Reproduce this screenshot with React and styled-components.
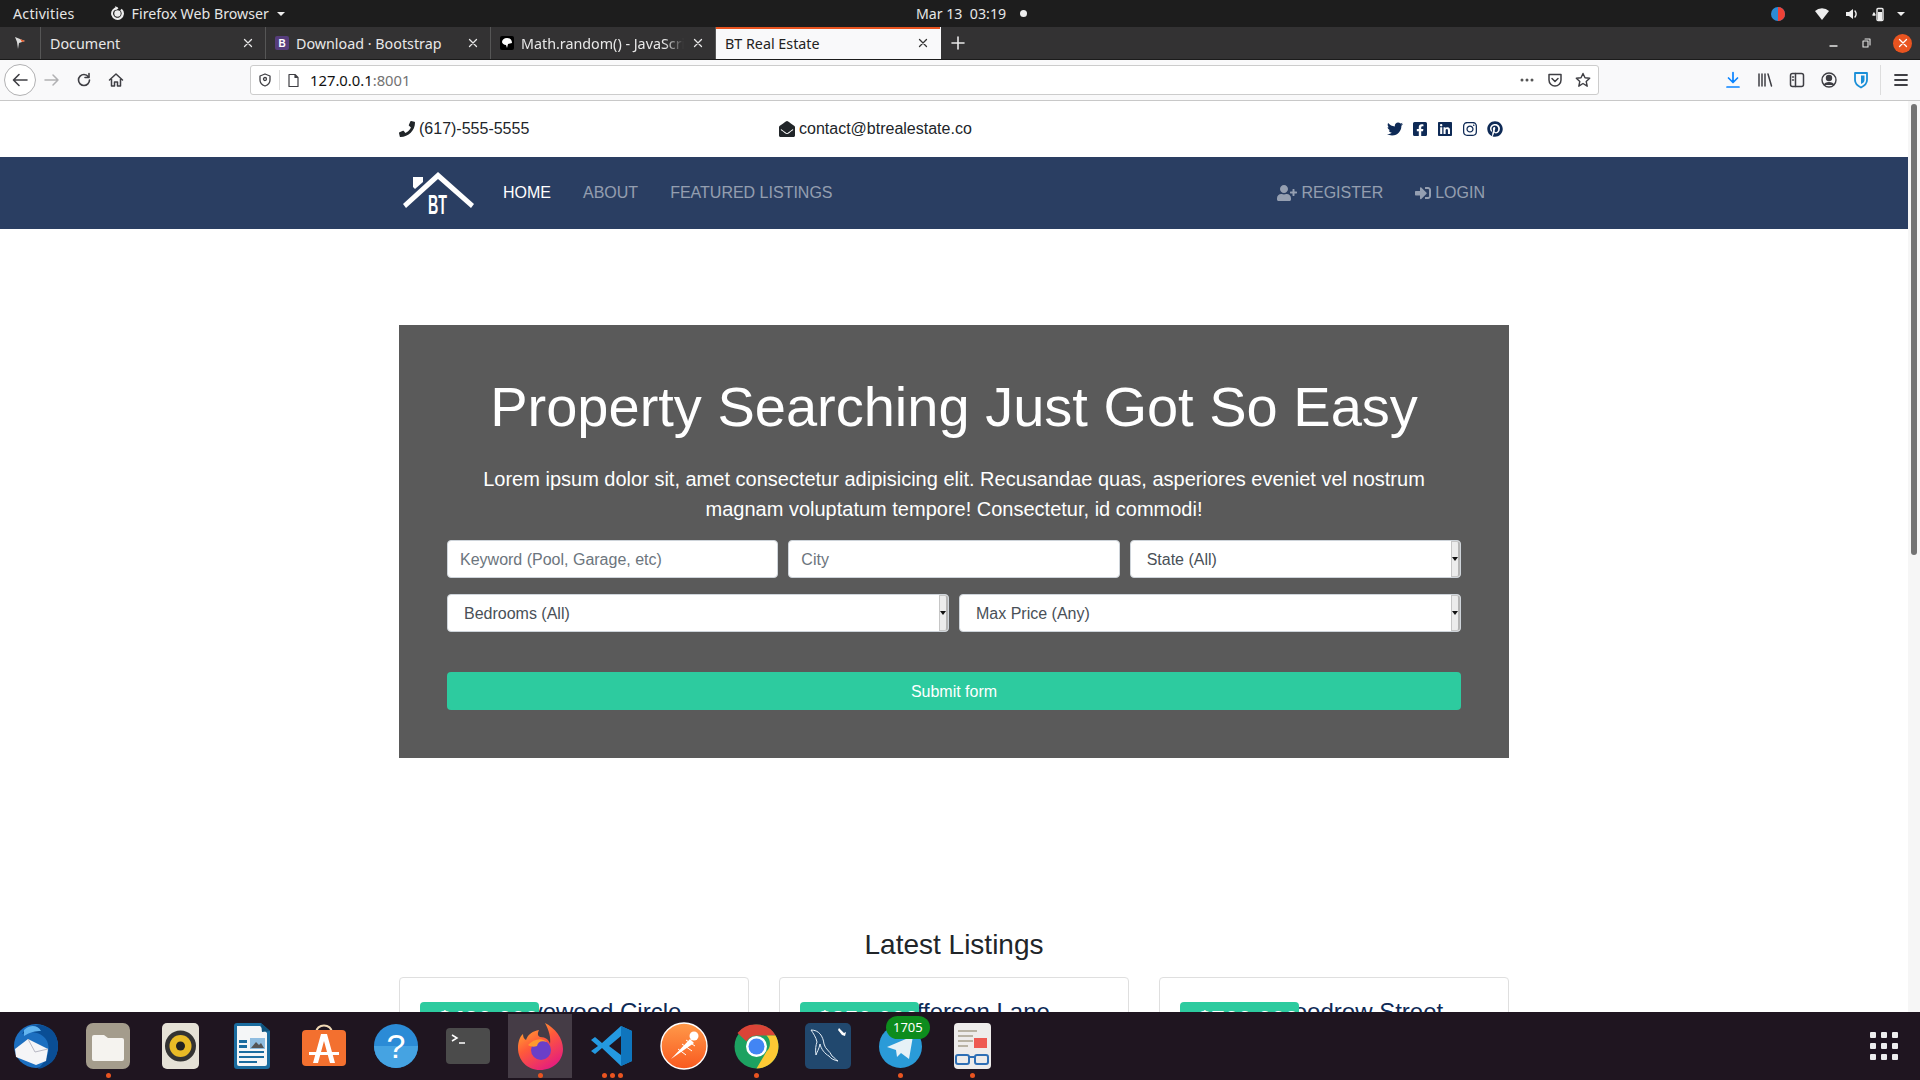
import React from 'react';
import styled, { createGlobalStyle } from 'styled-components';
import { FaPhone, FaEnvelopeOpen, FaTwitter, FaFacebookSquare, FaLinkedin, FaInstagram, FaPinterest, FaUserPlus, FaSignInAlt } from 'react-icons/fa';

const Global = createGlobalStyle`
  html, body { margin: 0; padding: 0; height: 100%; overflow: hidden; background: #fff; }
  * { box-sizing: border-box; }
  #root { height: 100%; }
`;
const sys = `"Noto Sans", "Open Sans", sans-serif`;
const web = `"Liberation Sans", Arial, sans-serif`;

const Screen = styled.div`
  width: 1920px; height: 1080px; display: flex; flex-direction: column; overflow: hidden; font-family: ${web};
`;
const TopBar = styled.div`
  height: 27px; flex: none; background: #1d1d1d; color: #e6e6e6; font: 14.2px ${sys};
  display: grid; grid-template-columns: 1fr auto 1fr; align-items: center; padding: 0 12px 0 13px;
`;
const TopLeft = styled.div`display: flex; align-items: center; gap: 35px;`;
const Activities = styled.span`letter-spacing: .25px;`;
const AppMenu = styled.div`display: flex; align-items: center; gap: 7px;`;
const Clock = styled.div`display: flex; align-items: center; gap: 14px; margin-left: 22px;`;
const StatusDot = styled.span`width: 7px; height: 7px; border-radius: 50%; background: #eee;`;
const TopRight = styled.div`display: flex; justify-content: flex-end; align-items: center; gap: 12px; padding-right: 2px;`;
const Tray = styled.span`display: flex; margin-right: ${p => p.$mr || 0}px; margin-left: ${p => p.$ml || 0}px;`;

const TabBar = styled.div`
  height: 33px; flex: none; background: #333233; display: flex; align-items: stretch; color: #e8e8e8; font: 14.3px ${sys};
  border-bottom: 1px solid #1b1b1b;
`;
const TabPin = styled.div`width: 41px; display: flex; align-items: center; justify-content: center; border-right: 1px solid #565656;`;
const Tab = styled.div`
  width: 225px; display: flex; align-items: center; gap: 7px; padding: 0 10px 0 9px; position: relative; white-space: nowrap;
  border-right: 1px solid ${p => p.$active ? 'transparent' : '#565656'};
  background: ${p => p.$active ? '#f9f9fa' : 'transparent'};
  color: ${p => p.$active ? '#222' : '#e8e8e8'};
  box-shadow: ${p => p.$active ? 'inset 0 2px 0 #e95420' : 'none'};
`;
const TabTitle = styled.span`
  flex: 1; overflow: hidden;
  ${p => p.$fade ? 'mask-image: linear-gradient(to right, #000 88%, transparent);' : ''}
`;
const TabClose = styled.span`width: 14px; display: flex; justify-content: center;`;
const Favicon = styled.span`
  width: 14px; height: 14px; flex: none; border-radius: 2px; background: ${p => p.$bg}; color: #fff; font: bold 10px ${web};
  display: flex; align-items: center; justify-content: center;
`;
const NewTab = styled.div`width: 33px; display: flex; align-items: center; justify-content: center;`;
const Spacer = styled.div`flex: 1;`;
const WinControls = styled.div`display: flex; align-items: center; gap: 22px; padding-right: 8px;`;
const CloseCircle = styled.span`
  width: 19px; height: 19px; border-radius: 50%; background: #e95420; display: flex; align-items: center; justify-content: center;
`;

const Toolbar = styled.div`
  height: 41px; flex: none; background: #f9f9fa; border-bottom: 1px solid #c8c8c8; display: flex; align-items: center; padding: 0 0 0 4px; color: #3f3f44;
`;
const BackBtn = styled.div`
  width: 32px; height: 32px; border-radius: 50%; border: 1px solid #b1b1b3; background: #fff; display: flex; align-items: center; justify-content: center;
`;
const NavIcon = styled.div`width: 32px; flex: none; display: flex; justify-content: center; align-items: center;`;
const UrlBar = styled.div`
  width: 1349px; height: 30px; margin-left: 118px; background: #fff; border: 1px solid #ccc; border-radius: 3px; display: flex; align-items: center; padding: 0 7px;
  font: 14.8px ${sys};
`;
const UrlDivider = styled.span`width: 1px; height: 20px; background: #ddd; margin: 0 6px 0 7px;`;
const Host = styled.span`color: #111; margin-left: 9px;`;
const Port = styled.span`color: #737373;`;
const UrlGrow = styled.span`flex: 1;`;
const UrlActions = styled.div`display: flex; align-items: center; gap: 12px;`;
const ToolRight = styled.div`display: flex; align-items: center; margin-left: 118px;`;
const ToolDiv = styled.span`width: 1px; height: 30px; background: #ddd; margin: 0 4px 0 3px;`;

const Viewport = styled.div`flex: 1; min-height: 0; display: flex; overflow: hidden;`;
const Page = styled.div`flex: 1; min-width: 0; overflow: hidden; background: #fff;`;
const Scrollbar = styled.div`width: 12px; flex: none; background: #f6f6f6; padding: 3px 3px 0;`;
const Thumb = styled.div`height: 451px; background: #737373; border-radius: 3px;`;

const Container = styled.div`width: 1110px; margin: 0 auto; height: ${p => p.$fill ? '100%' : 'auto'};`;
const ContactBar = styled.div`height: 56px;`;
const ContactRow = styled.div`
  height: 100%; display: grid; grid-template-columns: 1fr 1fr 1fr; align-items: center; color: #212529; font-size: 16px;
`;
const ContactItem = styled.div`display: flex; align-items: center; gap: 4px; margin-left: ${p => p.$ml || 0}px; svg { color: #212529; }`;
const Socials = styled.div`display: flex; justify-content: flex-end; align-items: center; gap: 9px; padding-right: 6px; color: #0e2a56;`;

const Nav = styled.nav`height: 72px; background: #2a3e62;`;
const NavInner = styled.div`height: 100%; display: flex; align-items: center; font-size: 16px; color: rgba(255,255,255,.5);`;
const NavLogo = styled.svg`width: 72px; height: 44px; margin: 0 28px 0 4px; flex: none;`;
const NavLink = styled.a`
  color: ${p => p.$active ? '#fff' : 'rgba(255,255,255,.5)'}; padding: 0 16px; display: flex; align-items: center; gap: 4px;
`;
const NavLeft = styled.div`display: flex; flex: 1; margin-left: -16px;`;
const NavRight = styled.div`display: flex; margin-right: 8px;`;

const Hero = styled.section`
  margin-top: 96px; background: #5a5a5a; color: #fff; text-align: center; padding: 48px 48px 48px; height: 433px;
`;
const Title = styled.h1`margin: 0 0 24px; font-size: 56px; font-weight: 300; line-height: 67px; font-family: ${web};`;
const Lead = styled.p`margin: 0 0 16px; font-size: 20px; line-height: 30px; font-weight: 300;`;
const FormRow = styled.div`display: grid; grid-template-columns: ${p => p.$cols}; gap: ${p => p.$gap}px; margin-bottom: 16px;`;
const fieldBase = `
  width: 100%; height: 38px; background: #fff; border: 1px solid #ced4da; border-radius: 4px; font: 16px ${web}; color: #495057; outline: none;
`;
const Input = styled.input`
  ${fieldBase} padding: 1px 12px 0;
  &::placeholder { color: #6c757d; opacity: 1; }
`;
const SelectWrap = styled.div`position: relative;`;
const Select = styled.select`
  ${fieldBase} padding: 0 16px; appearance: none;
`;
const Spin = styled.span`
  position: absolute; right: 1px; top: 1px; bottom: 1px; width: 9px; background: #ececec; border: 1px solid #c6c6c6; border-right: 2px solid #b5b5b5; border-radius: 0 3px 3px 0;
  display: flex; align-items: center; justify-content: center;
  &::after { content: ''; border-left: 3px solid transparent; border-right: 3px solid transparent; border-top: 4px solid #111; }
`;
const Submit = styled.button`
  display: block; width: 100%; height: 38px; margin-top: 40px; padding: 1px 0 0; background: #2dcb9f; color: #fff; border: 0; border-radius: 4px; font: 16px ${web};
`;

const Listings = styled.section`margin-top: 170px; text-align: center;`;
const ListHead = styled.h3`margin: 0 0 15px; font: 400 28px/34px ${web}; color: #212529;`;
const Cards = styled.div`display: grid; grid-template-columns: repeat(3, 350px); gap: 30px;`;
const Card = styled.div`position: relative; height: 300px; border: 1px solid #dfdfdf; border-radius: 4px; padding-top: 19px;`;
const CardTitle = styled.h4`margin: 0; font: 400 24px/29px ${web}; color: #0e2a56;`;
const Badge = styled.span`
  position: absolute; left: 20px; top: 24px; width: 119px; height: 40px; background: #2dcb9f; border-radius: 4px; color: #fff; font: bold 24px/36px ${web}; text-align: left; padding-left: 18px;
`;

const Dock = styled.div`
  height: 68px; flex: none; background: #1f1520; display: flex; align-items: center; position: relative;
`;
const DockItem = styled.div`
  width: 72px; height: 64px; flex: none; display: flex; align-items: center; justify-content: center; position: relative;
  background: ${p => p.$active ? '#453c46' : 'transparent'};
  margin: ${p => p.$active ? '0 4px' : '0'}; ${p => p.$active ? 'width: 64px;' : ''}
  svg { display: block; }
`;
const Dots = styled.span`position: absolute; bottom: 0; left: 0; right: 0; display: flex; justify-content: center; gap: 3px;`;
const Dot = styled.i`width: 5px; height: 5px; border-radius: 50%; background: #e95420;`;
const TgBadge = styled.span`
  position: absolute; top: 2px; left: 22px; background: #0d8c1d; color: #fff; font: 13px ${sys}; height: 23px; line-height: 23px; padding: 0 7px; border-radius: 12px;
`;
const DockGrid = styled.div`
  margin-left: auto; margin-right: 22px; display: grid; grid-template-columns: repeat(3, 6px); gap: 5px;
`;
const GridDot = styled.i`width: 6px; height: 6px; background: #eee; border-radius: 1px;`;

const I = ({ s = 16, vb = '0 0 16 16', children, stroke = 'currentColor', fill = 'none', sw = 1.4, color }) => (
  <svg width={s} height={s} viewBox={vb} fill={fill} stroke={stroke} strokeWidth={sw} strokeLinecap="round" strokeLinejoin="round" style={color ? { color } : undefined}>{children}</svg>
);
const X = ({ c }) => <I s={12} vb="0 0 12 12" color={c} sw={1.3}><path d="M2.5 2.5l7 7M9.5 2.5l-7 7" /></I>;

const Tile = ({ bg, r = 6, w = 44, h = 46, children }) => (
  <svg width={w} height={h} viewBox={`0 0 ${w} ${h}`}><rect width={w} height={h} rx={r} fill={bg} />{children}</svg>
);

const Thunderbird = () => (
  <svg width="48" height="48" viewBox="0 0 48 48">
    <circle cx="24" cy="24" r="22" fill="#1c6fc0" /><path d="M10 12C16 2 30 0 40 8c8 8 8 24 0 32-4 3-8 6-14 7 6-6 14-16 9-28C30 9 17 9 10 12z" fill="#0a4e95" />
    <path d="M12 8c6-6 14-5 17 1-5 0-11 1-17 5z" fill="#62b5f0" />
    <path d="M3 27l13-10 20 10-2 12-10 4L4 35z" fill="#f5f5f7" /><path d="M16 17l7 13 13-3" fill="none" stroke="#b8b8c4" strokeWidth="1" />
  </svg>
);
const Files = () => (
  <Tile bg="#a49c8c" r={7}>
    <path d="M6 14a2 2 0 012-2h10l4 3h14a2 2 0 012 2v19a2 2 0 01-2 2H8a2 2 0 01-2-2z" fill="#f5f3ef" />
  </Tile>
);
const Rhythmbox = () => (
  <svg width="37" height="46" viewBox="0 0 37 46"><rect width="37" height="46" rx="5" fill="#e5e1d6" /><circle cx="18.500" cy="23" r="15.500" fill="#333" /><circle cx="18.500" cy="23" r="11" fill="#e9bb26" /><circle cx="18.500" cy="23" r="4.500" fill="#222" /></svg>
);
const Writer = () => (
  <svg width="36" height="46" viewBox="0 0 36 46">
    <path d="M3 0h24l9 8v35a3 3 0 01-3 3H3a3 3 0 01-3-3V3a3 3 0 013-3z" fill="#1a6c9f" /><path d="M3 3h23l7 7v31a2 2 0 01-2 2H5a2 2 0 01-2-2z" fill="#f4f6f7" />
    <path d="M27 0l9 8-8 1z" fill="#0f527b" />
    <rect x="5" y="17" width="8" height="3" fill="#1a6c9f" /><rect x="5" y="22" width="8" height="3" fill="#1a6c9f" /><rect x="5" y="28" width="25" height="2" fill="#1a6c9f" /><rect x="5" y="33" width="25" height="2" fill="#1a6c9f" /><rect x="5" y="38" width="18" height="2" fill="#1a6c9f" />
    <rect x="16" y="15" width="15" height="11" fill="#8fbde0" /><path d="M17 25l5-6 3 3 2-2 3 5z" fill="#555" />
  </svg>
);
const Software = () => (
  <svg width="44" height="44" viewBox="0 0 44 44">
    <path d="M14 9c0-10 16-10 16 0" fill="none" stroke="#f0d8b4" strokeWidth="2" /><rect y="6" width="44" height="36" rx="4" fill="#f3702f" />
    <path d="M7 28h30v3H7z" fill="#fff" /><path d="M19 10h6l8 29h-5l-6-22-6 22h-5z" fill="#fff" />
  </svg>
);
const Help = () => (
  <svg width="44" height="44" viewBox="0 0 44 44"><circle cx="22" cy="22" r="22" fill="#2b8bd6" /><path d="M0 22a22 22 0 0044 0z" fill="#45a3e2" /><text x="22" y="34" textAnchor="middle" fontFamily="Liberation Sans" fontSize="34" fill="#fff">?</text></svg>
);
const Terminal = () => (
  <svg width="44" height="36" viewBox="0 0 44 36"><rect width="44" height="36" rx="4" fill="#4b4b4b" /><path d="M6 7l5 3-5 3" fill="none" stroke="#fff" strokeWidth="1.5" /><path d="M13 15h6" stroke="#fff" strokeWidth="1.5" /></svg>
);
const Firefox = () => (
  <svg width="45" height="47" viewBox="0 0 45 47">
    <defs><linearGradient id="ff" x1="0" y1="0" x2="0.6" y2="1"><stop offset="0" stopColor="#ffbc2d" /><stop offset=".5" stopColor="#ff5a3a" /><stop offset="1" stopColor="#e6207a" /></linearGradient></defs>
    <path d="M22 47C9 47 0 37 0 25 0 19 2 13 5 11c0 3 1 5 3 6 2-6 7-9 13-10-2 4-1 6 1 7 6 0 9 3 10 7 1-6-1-14-5-21 10 5 18 15 18 26 0 12-10 21-23 21z" fill="url(#ff)" />
    <circle cx="23" cy="27" r="10" fill="#6a3fc8" /><path d="M10 22c5-6 14-8 19-3-6-2-9 0-10 4-3 1-6 1-9-1z" fill="#ff9a2e" />
  </svg>
);
const VSCode = () => (
  <svg width="42" height="42" viewBox="0 0 42 42">
    <path d="M30 1l11 5v30l-11 5L11 23l-7 6-4-3 7-5-7-6 4-3 7 6z" fill="#2499e0" /><path d="M30 1l11 5v30l-11 5z" fill="#0f75bd" /><path d="M30 11L18 21l12 9z" fill="#1f1520" />
  </svg>
);
const Postman = () => (
  <svg width="48" height="48" viewBox="0 0 48 48">
    <defs><linearGradient id="pm" x1="0" y1="0" x2="0" y2="1"><stop offset="0" stopColor="#ff9a4a" /><stop offset="1" stopColor="#f9591f" /></linearGradient></defs>
    <circle cx="24" cy="24" r="23" fill="url(#pm)" stroke="#fff" strokeWidth="1.4" />
    <path d="M11 37l19-20 4 4z" fill="#fff" /><circle cx="34" cy="14" r="4.500" fill="#fff" /><path d="M26 18l9 6M22 22l10 7M18 27l8 6" stroke="#fff" strokeWidth="1" />
  </svg>
);
const Chrome = () => (
  <svg width="45" height="45" viewBox="0 0 45 45">
    <circle cx="22.500" cy="22.500" r="22" fill="#1da261" /><path d="M22.500.5a22 22 0 0119 11H22.500a11 11 0 00-10 6L3.500 9A22 22 0 0122.500.5z" fill="#db4437" /><path d="M41.500 11.500A22 22 0 0122.500 44.500l10-17a11 11 0 000-16z" fill="#fcc934" />
    <circle cx="22.500" cy="22.500" r="10.500" fill="#fff" /><circle cx="22.500" cy="22.500" r="8" fill="#4285f4" />
  </svg>
);
const Workbench = () => (
  <svg width="46" height="46" viewBox="0 0 46 46">
    <rect width="46" height="46" rx="5" fill="#21486e" /><path d="M6 7c8 0 12 6 13 14 1 5 6 7 8 12 3 2 4 4 6 5-4-1-7-2-9-5-4-2-8-7-9-12-1 5-3 8-4 11-1-6 0-10 1-13C11 14 8 10 6 7z" fill="none" stroke="#e4eef6" strokeWidth="1" />
    <path d="M34 5l5 5 2-1-1 4-3-1-4-5z" fill="#fff" />
  </svg>
);
const Telegram = () => (
  <svg width="43" height="43" viewBox="0 0 43 43"><circle cx="21.500" cy="21.500" r="21.500" fill="#2a9bd8" /><path d="M8 22l26-11-4 23-8-6-4 4-1-7z" fill="#e6f1f7" /></svg>
);
const Reader = () => (
  <Tile bg="#eeeceb" w={37} h={46} r={4}>
    <path d="M4 8h19M4 13h15M4 18h15M4 23h10" stroke="#b9b3a4" strokeWidth="2" /><rect x="20" y="15" width="13" height="10" fill="#ee5a52" />
    <rect x="2" y="32" width="13" height="9" rx="2" fill="none" stroke="#2f6fb5" strokeWidth="2" /><rect x="21" y="32" width="13" height="9" rx="2" fill="none" stroke="#2f6fb5" strokeWidth="2" /><path d="M15 34h6" stroke="#2f6fb5" strokeWidth="2" />
  </Tile>
);

const Logo = () => (
  <NavLogo viewBox="0 0 72 44">
    <path d="M0 33L35 1l36 32-3 4L35 8 3 37z" fill="#fff" />
    <path d="M10 6h10v5l-8 7-2-2z" fill="#fff" />
    <text x="25" y="43" fontFamily="Liberation Sans" fontWeight="700" fontSize="27" fill="#fff" textLength="19" lengthAdjust="spacingAndGlyphs">BT</text>
  </NavLogo>
);

const dock = [
  { c: <Thunderbird /> }, { c: <Files />, d: 1 }, { c: <Rhythmbox /> }, { c: <Writer /> }, { c: <Software /> }, { c: <Help /> }, { c: <Terminal /> },
  { c: <Firefox />, d: 1, active: true }, { c: <VSCode />, d: 3 }, { c: <Postman /> }, { c: <Chrome />, d: 1 }, { c: <Workbench /> },
  { c: <Telegram />, d: 1, tg: true }, { c: <Reader />, d: 1 },
];

export default function App() {
  return (
    <Screen>
      <Global />
      <TopBar>
        <TopLeft>
          <Activities>Activities</Activities>
          <AppMenu>
            <I s={15} vb="0 0 14 14" fill="#eee" stroke="none"><path d="M7 1a6 6 0 104 1.500L9.500 4A4 4 0 117 3z" /><path d="M5 0l3 2-3 2z" /><circle cx="7" cy="7" r="3" /></I>
            Firefox Web Browser
            <I s={10} vb="0 0 10 10" fill="#eee" stroke="none"><path d="M1 3h8L5 7z" /></I>
          </AppMenu>
        </TopLeft>
        <Clock><span>Mar 13&nbsp;&nbsp;03:19</span><StatusDot /></Clock>
        <TopRight>
          <Tray $mr={17}><svg width="14" height="16" viewBox="0 0 14 16"><circle cx="7" cy="8" r="7" fill="#2b8bd6" /><path d="M7 1a7 7 0 010 14z" fill="#ef4136" /></svg></Tray>
          <Tray $mr={2}><I s={16} fill="#eee" stroke="none"><path d="M1 5a10 10 0 0114 0l-7 9z" /></I></Tray>
          <Tray><I s={16} fill="#eee" stroke="none"><path d="M2 6h3l4-3v10l-4-3H2z" /><path d="M11 5c1.500 2 1.500 4 0 6" fill="none" stroke="#eee" /></I></Tray>
          <Tray><I s={16} color="#eee"><path d="M2 7l-1 2h2z" /><rect x="5" y="2.500" width="6" height="12" rx="1" /><rect x="6" y="6" width="4" height="8" fill="#eee" stroke="none" /></I></Tray>
          <Tray $ml={-4}><I s={10} vb="0 0 10 10" fill="#eee" stroke="none"><path d="M1 3h8L5 7z" /></I></Tray>
        </TopRight>
      </TopBar>
      <TabBar>
        <TabPin><svg width="12" height="14" viewBox="0 0 12 14"><path d="M1 1l10 4-6 2-1 6-1-7z" fill="#ddd" /><path d="M6 3l5 2-3 1z" fill="#e95420" /></svg></TabPin>
        <Tab><TabTitle>Document</TabTitle><TabClose><X /></TabClose></Tab>
        <Tab><Favicon $bg="#563d7c">B</Favicon><TabTitle>Download · Bootstrap</TabTitle><TabClose><X /></TabClose></Tab>
        <Tab><Favicon $bg="#000"><svg width="10" height="10" viewBox="0 0 10 10"><path d="M5 0c3 0 5 2 5 5L6 6l-1 4-1-3C2 7 0 5 0 4c0-2 2-4 5-4z" fill="#fff" /></svg></Favicon><TabTitle $fade>Math.random() - JavaScript | MDN</TabTitle><TabClose><X /></TabClose></Tab>
        <Tab $active><TabTitle>BT Real Estate</TabTitle><TabClose><X c="#333" /></TabClose></Tab>
        <NewTab><I s={14} vb="0 0 14 14" sw={1.6}><path d="M7 1v12M1 7h12" /></I></NewTab>
        <Spacer />
        <WinControls>
          <I s={10} vb="0 0 10 10"><path d="M1 8h7" /></I>
          <I s={10} vb="0 0 10 10" sw={1.1}><rect x="2" y="3" width="5" height="6" /><path d="M4 1h5v6" /></I>
          <CloseCircle><X c="#fff" /></CloseCircle>
        </WinControls>
      </TabBar>
      <Toolbar>
        <BackBtn><I s={18} vb="0 0 18 18" sw={1.6}><path d="M16 9H3M8 3.500L2.500 9 8 14.500" /></I></BackBtn>
        <NavIcon><I s={18} vb="0 0 18 18" color="#b1b1b3" sw={1.5}><path d="M2 9h13M10 4l5 5-5 5" /></I></NavIcon>
        <NavIcon><I s={16} sw={1.6}><path d="M13.500 8A5.500 5.500 0 118 2.500c2 0 3.500 1 4.500 2.500" /><path d="M13 1.500V5.500H9" /></I></NavIcon>
        <NavIcon><I s={16} sw={1.5}><path d="M1.500 8L8 2l6.500 6M3.500 7v7h3v-4h3v4h3V7" /></I></NavIcon>
        <UrlBar>
          <I s={14} vb="0 0 14 14" sw={1.3}><path d="M7 1l5 2v4c0 3-2 5-5 6-3-1-5-3-5-6V3z" /><circle cx="7" cy="6" r="1.500" /></I>
          <UrlDivider />
          <I s={15} vb="0 0 15 15" sw={1.2}><path d="M3 1.500h6l3 3v9H3zM9 1.500v3h3" /></I>
          <Host>127.0.0.1</Host><Port>:8001</Port>
          <UrlGrow />
          <UrlActions>
            <I s={16} fill="#555" stroke="none"><circle cx="3" cy="8" r="1.500" /><circle cx="8" cy="8" r="1.500" /><circle cx="13" cy="8" r="1.500" /></I>
            <I s={16} sw={1.5}><path d="M2 2.500h12V8a6 6 0 01-12 0z" /><path d="M5 6.500l3 3 3-3" /></I>
            <I s={16} sw={1.4}><path d="M8 1.500l2 4.300 4.700.5-3.500 3.200 1 4.700L8 11.500l-4.200 2.700 1-4.700L1.300 6.300 6 5.800z" /></I>
          </UrlActions>
        </UrlBar>
        <ToolRight>
          <NavIcon><I s={18} vb="0 0 18 18" color="#0a84ff" sw={1.7}><path d="M9 1.500V11M4.500 7L9 11.500 13.500 7M3 16h12" /></I></NavIcon>
          <NavIcon><I s={18} vb="0 0 18 18" sw={1.5}><path d="M3 3v12M6 3v12M9 3v12M12 3l3.500 12" /></I></NavIcon>
          <NavIcon><I s={18} vb="0 0 18 18" sw={1.5}><rect x="2.500" y="2.500" width="13" height="13" rx="2" /><path d="M7.500 2.500v13M4.500 6h1M4.500 9h1" /></I></NavIcon>
          <NavIcon><I s={18} vb="0 0 18 18" sw={1.4}><circle cx="9" cy="9" r="7" /><circle cx="9" cy="7" r="2.500" fill="currentColor" /><path d="M4.500 14c1-3 8-3 9 0" fill="currentColor" /></I></NavIcon>
          <NavIcon><I s={18} vb="0 0 18 18" color="#1a8fd8" sw={1.8}><path d="M3 2h12v7c0 4-3 6-6 7.500C6 15 3 13 3 9z" /><path d="M9 4.500h3.500V9c0 2-1.500 3-3.500 4z" fill="currentColor" stroke="none" /></I></NavIcon>
          <ToolDiv />
          <NavIcon><I s={18} vb="0 0 18 18" sw={1.8}><path d="M3 4h12M3 9h12M3 14h12" /></I></NavIcon>
        </ToolRight>
      </Toolbar>
      <Viewport>
        <Page>
          <ContactBar><Container $fill>
            <ContactRow>
              <ContactItem><FaPhone size={16} /> (617)-555-5555</ContactItem>
              <ContactItem $ml={10}><FaEnvelopeOpen size={16} /> contact@btrealestate.co</ContactItem>
              <Socials><FaTwitter size={16} /><FaFacebookSquare size={16} /><FaLinkedin size={16} /><FaInstagram size={16} /><FaPinterest size={16} /></Socials>
            </ContactRow>
          </Container></ContactBar>
          <Nav><Container $fill><NavInner>
            <Logo />
            <NavLeft>
              <NavLink $active>HOME</NavLink><NavLink>ABOUT</NavLink><NavLink>FEATURED LISTINGS</NavLink>
            </NavLeft>
            <NavRight>
              <NavLink><FaUserPlus size={20} /> REGISTER</NavLink><NavLink><FaSignInAlt size={16} /> LOGIN</NavLink>
            </NavRight>
          </NavInner></Container></Nav>
          <Container>
            <Hero>
              <Title>Property Searching Just Got So Easy</Title>
              <Lead>Lorem ipsum dolor sit, amet consectetur adipisicing elit. Recusandae quas, asperiores eveniet vel nostrum magnam voluptatum tempore! Consectetur, id commodi!</Lead>
              <FormRow $cols="1fr 1fr 1fr" $gap={10}>
                <Input placeholder="Keyword (Pool, Garage, etc)" />
                <Input placeholder="City" />
                <SelectWrap><Select defaultValue="a"><option value="a">State (All)</option></Select><Spin /></SelectWrap>
              </FormRow>
              <FormRow $cols="1fr 1fr" $gap={10}>
                <SelectWrap><Select defaultValue="a"><option value="a">Bedrooms (All)</option></Select><Spin /></SelectWrap>
                <SelectWrap><Select defaultValue="a"><option value="a">Max Price (Any)</option></Select><Spin /></SelectWrap>
              </FormRow>
              <Submit>Submit form</Submit>
            </Hero>
            <Listings>
              <ListHead>Latest Listings</ListHead>
              <Cards>
                {[['45 Drivewood Circle', '$490,000'], ['12 Jefferson Lane', '$250,000'], ['187 Woodrow Street', '$700,000']].map(([t, p]) => (
                  <Card key={t}><CardTitle>{t}</CardTitle><Badge>{p}</Badge></Card>
                ))}
              </Cards>
            </Listings>
          </Container>
        </Page>
        <Scrollbar><Thumb /></Scrollbar>
      </Viewport>
      <Dock>
        {dock.map((d, i) => (
          <DockItem key={i} $active={d.active}>
            {d.c}
            {d.tg && <TgBadge>1705</TgBadge>}
            {d.d && <Dots>{Array.from({ length: d.d }).map((_, j) => <Dot key={j} />)}</Dots>}
          </DockItem>
        ))}
        <DockGrid>{Array.from({ length: 9 }).map((_, i) => <GridDot key={i} />)}</DockGrid>
      </Dock>
    </Screen>
  );
}
